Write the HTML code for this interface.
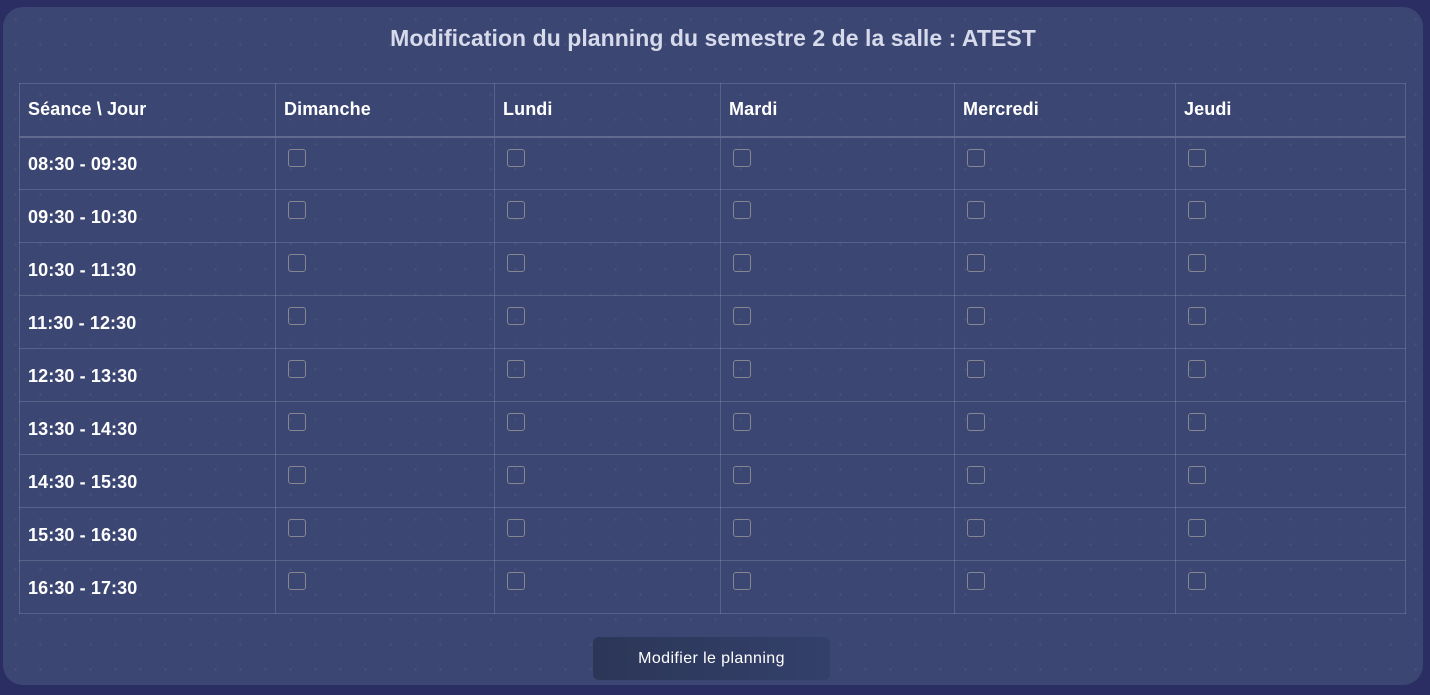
<!DOCTYPE html>
<html><head><style>
html,body{margin:0;width:1430px;height:695px;background:#2b2e63;overflow:hidden;font-family:"Liberation Sans",sans-serif;}
.card{position:absolute;left:3px;top:7px;width:1420px;height:678px;border-radius:20px;
background-image:radial-gradient(circle,rgba(255,255,255,0.06) 1px,transparent 1.5px);background-size:25px 25px;background-color:#3b4673;}
h1{position:absolute;left:0;width:1426px;top:25px;margin:0;text-align:center;font-size:23px;font-weight:bold;color:#d6daea;letter-spacing:0.05px}
table{position:absolute;left:19px;top:83px;border-collapse:collapse;}
td,th{border:1px solid rgba(255,255,255,0.15);color:#fff;font-weight:bold;font-size:18px;text-align:left;vertical-align:top;padding:0 0 0 8px;height:53px;box-sizing:border-box;letter-spacing:0.1px}
th{height:53px;vertical-align:middle;border-bottom:2px solid rgba(255,255,255,0.2)}
td.t{vertical-align:middle;padding-top:2px}
.cb{display:inline-block;width:18px;height:18px;border:1px solid #85868f;border-radius:3px;margin-top:11px;margin-left:4px;box-sizing:border-box}
.btn{position:absolute;left:593px;top:637px;width:237px;height:43px;border-radius:6px;background:linear-gradient(90deg,#2c3658,#33406a);color:#fff;font-size:16px;text-align:center;line-height:44px;letter-spacing:0.4px}
</style></head><body>
<div class="card"></div>
<h1>Modification du planning du semestre 2 de la salle : ATEST</h1>
<table>
<tr><th style="width:256px">Séance \ Jour</th><th style="width:219px">Dimanche</th><th style="width:226px">Lundi</th><th style="width:234px">Mardi</th><th style="width:221px">Mercredi</th><th style="width:230px">Jeudi</th></tr>
<tr><td class="t">08:30 - 09:30</td><td><span class="cb"></span></td><td><span class="cb"></span></td><td><span class="cb"></span></td><td><span class="cb"></span></td><td><span class="cb"></span></td></tr>
<tr><td class="t">09:30 - 10:30</td><td><span class="cb"></span></td><td><span class="cb"></span></td><td><span class="cb"></span></td><td><span class="cb"></span></td><td><span class="cb"></span></td></tr>
<tr><td class="t">10:30 - 11:30</td><td><span class="cb"></span></td><td><span class="cb"></span></td><td><span class="cb"></span></td><td><span class="cb"></span></td><td><span class="cb"></span></td></tr>
<tr><td class="t">11:30 - 12:30</td><td><span class="cb"></span></td><td><span class="cb"></span></td><td><span class="cb"></span></td><td><span class="cb"></span></td><td><span class="cb"></span></td></tr>
<tr><td class="t">12:30 - 13:30</td><td><span class="cb"></span></td><td><span class="cb"></span></td><td><span class="cb"></span></td><td><span class="cb"></span></td><td><span class="cb"></span></td></tr>
<tr><td class="t">13:30 - 14:30</td><td><span class="cb"></span></td><td><span class="cb"></span></td><td><span class="cb"></span></td><td><span class="cb"></span></td><td><span class="cb"></span></td></tr>
<tr><td class="t">14:30 - 15:30</td><td><span class="cb"></span></td><td><span class="cb"></span></td><td><span class="cb"></span></td><td><span class="cb"></span></td><td><span class="cb"></span></td></tr>
<tr><td class="t">15:30 - 16:30</td><td><span class="cb"></span></td><td><span class="cb"></span></td><td><span class="cb"></span></td><td><span class="cb"></span></td><td><span class="cb"></span></td></tr>
<tr><td class="t">16:30 - 17:30</td><td><span class="cb"></span></td><td><span class="cb"></span></td><td><span class="cb"></span></td><td><span class="cb"></span></td><td><span class="cb"></span></td></tr>
</table>
<div class="btn">Modifier le planning</div>
</body></html>
